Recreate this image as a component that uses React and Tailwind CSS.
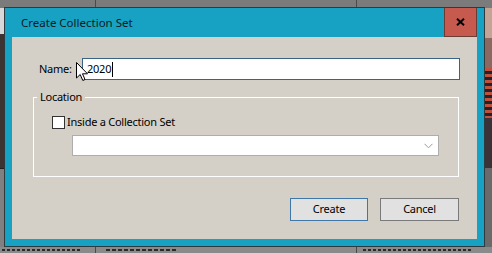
import React from "react";

const font = { fontFamily: '"Noto Sans", "Segoe UI", sans-serif' };

function Cursor() {
  return (
    <svg width="13" height="20" viewBox="0 0 13 20" className="absolute left-[76px] top-[62px]">
      <path d="M0.5 0.5 L0.5 16 L4.2 12.5 L6.8 18.5 L9 17.5 L6.5 11.8 L11.5 11.8 Z" fill="#fff" stroke="#000" strokeWidth="1" strokeLinejoin="miter" />
    </svg>
  );
}

function Chevron() {
  return (
    <svg width="9" height="6" viewBox="0 0 9 6" className="mr-[5px]">
      <path d="M0.5 0.8 L4.5 4.8 L8.5 0.8" fill="none" stroke="#9a9a9a" strokeWidth="1" />
    </svg>
  );
}

export default function App() {
  return (
    <div className="relative w-[492px] h-[253px] overflow-hidden bg-[#7a7a7a]" style={font}>
      {/* background app */}
      <div className="flex flex-col w-full h-full">
        <div className="flex h-[8px] bg-[#7b7b7b]">
          <div className="w-[96px] border-r border-[#4a4a4a]" />
          <div className="w-[261px] border-r border-[#4a4a4a]" />
          <div className="flex-1" />
        </div>
        <div className="flex flex-1">
          <div className="flex flex-col w-[5px]">
            <div className="h-[26px] bg-[#d8d8d8]" />
            <div className="h-[134px] bg-[#3d3431]" />
            <div className="h-[1px] bg-[#222]" />
            <div className="flex-1 bg-[#808080]" />
          </div>
          <div className="flex-1" />
          <div className="flex flex-col w-[8px]">
            <div className="h-[30px] bg-[#c4a494]" />
            <div className="h-[30px] bg-[#8a6a60]" />
            <div className="h-[50px] bg-[repeating-linear-gradient(180deg,#c0503a_0px,#c0503a_3px,#1f2330_3px,#1f2330_6px)]" />
            <div className="h-[50px] bg-[#3a3236]" />
            <div className="flex-1 bg-[#6a6a6a]" />
          </div>
        </div>
        <div className="flex h-[6px] bg-[#8a8a8a]">
          <div className="w-[96px] border-r border-[#4a4a4a] pt-[2px] pl-[2px]">
            <div className="h-[2px] w-[80px] bg-[repeating-linear-gradient(90deg,#2a2a2a_0px,#2a2a2a_3px,transparent_3px,transparent_5px)]" />
          </div>
          <div className="w-[261px] border-r border-[#4a4a4a] pt-[2px] pl-[10px]">
            <div className="h-[2px] w-[70px] bg-[repeating-linear-gradient(90deg,#2a2a2a_0px,#2a2a2a_4px,transparent_4px,transparent_6px)]" />
          </div>
          <div className="flex-1 pt-[2px] pl-[6px]">
            <div className="h-[2px] w-[110px] bg-[repeating-linear-gradient(90deg,#2a2a2a_0px,#2a2a2a_3px,transparent_3px,transparent_5px)]" />
          </div>
        </div>
      </div>

      {/* dialog window */}
      <div className="absolute left-[4px] top-[7px] w-[481px] h-[240px] border border-[#2d3a40] bg-[#17a1c2] flex flex-col">
        <div className="flex h-[29px] items-center">
          <div className="flex-1 pl-[16px] text-[11.5px] text-[#0d1a1f] pt-[1px]">Create Collection Set</div>
          <div className="w-[33px] h-[29px] mr-[7px] bg-[#c65a4f] border-l border-b border-r border-[#6b3b36] flex items-center justify-center">
            <svg width="9" height="8" viewBox="0 0 9 8">
              <path d="M1 0.8 L8 7.2 M8 0.8 L1 7.2" stroke="#000" strokeWidth="2" />
            </svg>
          </div>
        </div>
        <div className="mx-[7px] mb-[7px] flex-1 bg-[#d4d0c8] flex flex-col text-[11px] tracking-[-0.25px] text-black">
          <div className="flex items-center mt-[21px] h-[22px]">
            <div className="w-[70px] pl-[27px]">Name:</div>
            <div className="w-[378px] h-[22px] bg-white border border-[#3b6383] flex items-center pl-[4px]">
              <span>2020</span>
              <span className="w-[1px] h-[15px] bg-black ml-[1px]" />
            </div>
          </div>
          <div className="relative ml-[21px] mt-[17px] w-[426px] h-[80px] border border-white">
            <span className="absolute left-[3px] top-[-9px] px-[3px] bg-[#d4d0c8] leading-[16px]">Location</span>
            <div className="flex items-center h-[13px] mt-[18px] ml-[18px]">
              <div className="w-[13px] h-[13px] bg-white border border-[#333]" />
              <span className="ml-[2px]">Inside a Collection Set</span>
            </div>
            <div className="ml-[38px] mt-[6px] w-[367px] h-[21px] bg-white border border-[#adadad] flex items-center justify-end">
              <Chevron />
            </div>
          </div>
          <div className="flex justify-end gap-[12px] mt-[21px] pr-[18px]">
            <div className="w-[78px] h-[23px] bg-[#e1e1e1] border border-[#3f77a8] flex items-center justify-center">Create</div>
            <div className="w-[79px] h-[23px] bg-[#e1e1e1] border border-[#7a7a7a] flex items-center justify-center">Cancel</div>
          </div>
        </div>
      </div>

      <Cursor />
    </div>
  );
}
